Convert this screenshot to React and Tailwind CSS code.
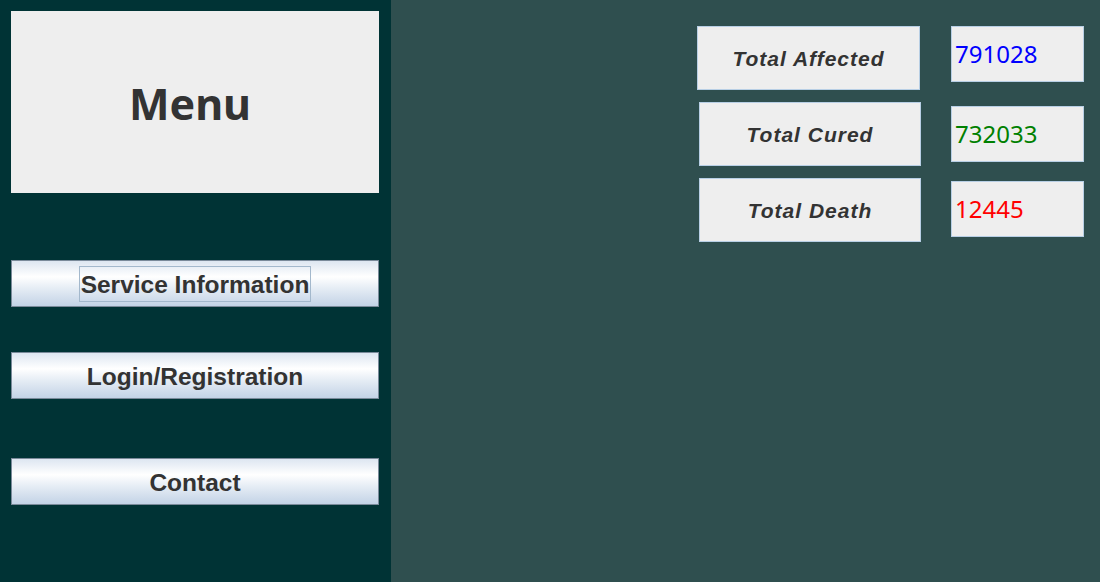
export default function App() {
  const btn =
    "w-[368px] h-[47px] border border-[#7a8a9a] bg-[linear-gradient(to_bottom,#dde6f1_0%,#ffffff_35%,#e6edf5_60%,#c3d3e6_100%)] flex items-center justify-center text-[24.5px] font-bold text-[#333333] font-['Liberation_Sans',Arial,sans-serif] pt-[4px]";
  const label =
    "h-[64px] border border-[#b8cfe5] bg-[#eeeeee] flex items-center justify-center text-[21px] font-bold italic tracking-[1px] text-[#333333] font-['Liberation_Sans',Arial,sans-serif] pt-[2px]";
  const value =
    "w-[133px] h-[56px] border border-[#b8cfe5] bg-[#eeeeee] flex items-center pl-[3px] text-[24px] font-['Noto_Sans',sans-serif]";
  return (
    <div className="w-[1100px] h-[582px] flex overflow-hidden">
      <div className="w-[391px] h-full bg-[#003335] flex flex-col pt-[11px] pl-[11px]">
        <div className="w-[368px] h-[182px] bg-[#eeeeee] flex items-center justify-center">
          <span className="text-[43px] font-bold text-[#333333] font-['Noto_Sans',Tahoma,sans-serif] leading-none mt-[2px] -ml-[10px]">
            Menu
          </span>
        </div>
        <div className={btn + " mt-[67px]"}>
          <span className="border border-[#a3b8cc] px-[1px] leading-[32px] -mt-[4px] pt-[2px]">Service Information</span>
        </div>
        <div className={btn + " mt-[45px]"}>Login/Registration</div>
        <div className={btn + " mt-[59px]"}>Contact</div>
      </div>
      <div className="flex-1 h-full bg-[#2f4f4f] flex flex-col pt-[26px]">
        <div className="flex items-start">
          <div className={label + " w-[223px] ml-[306px]"}>Total Affected</div>
          <div className={value + " ml-[31px] text-[#0000ff]"}>791028</div>
        </div>
        <div className="flex items-start mt-[12px]">
          <div className={label + " w-[222px] ml-[308px]"}>Total Cured</div>
          <div className={value + " ml-[30px] mt-[4px] h-[55px] text-[#008000]"}>732033</div>
        </div>
        <div className="flex items-start mt-[12px]">
          <div className={label + " w-[222px] ml-[308px]"}>Total Death</div>
          <div className={value + " ml-[30px] mt-[3px] text-[#ff0000]"}>12445</div>
        </div>
      </div>
    </div>
  );
}
